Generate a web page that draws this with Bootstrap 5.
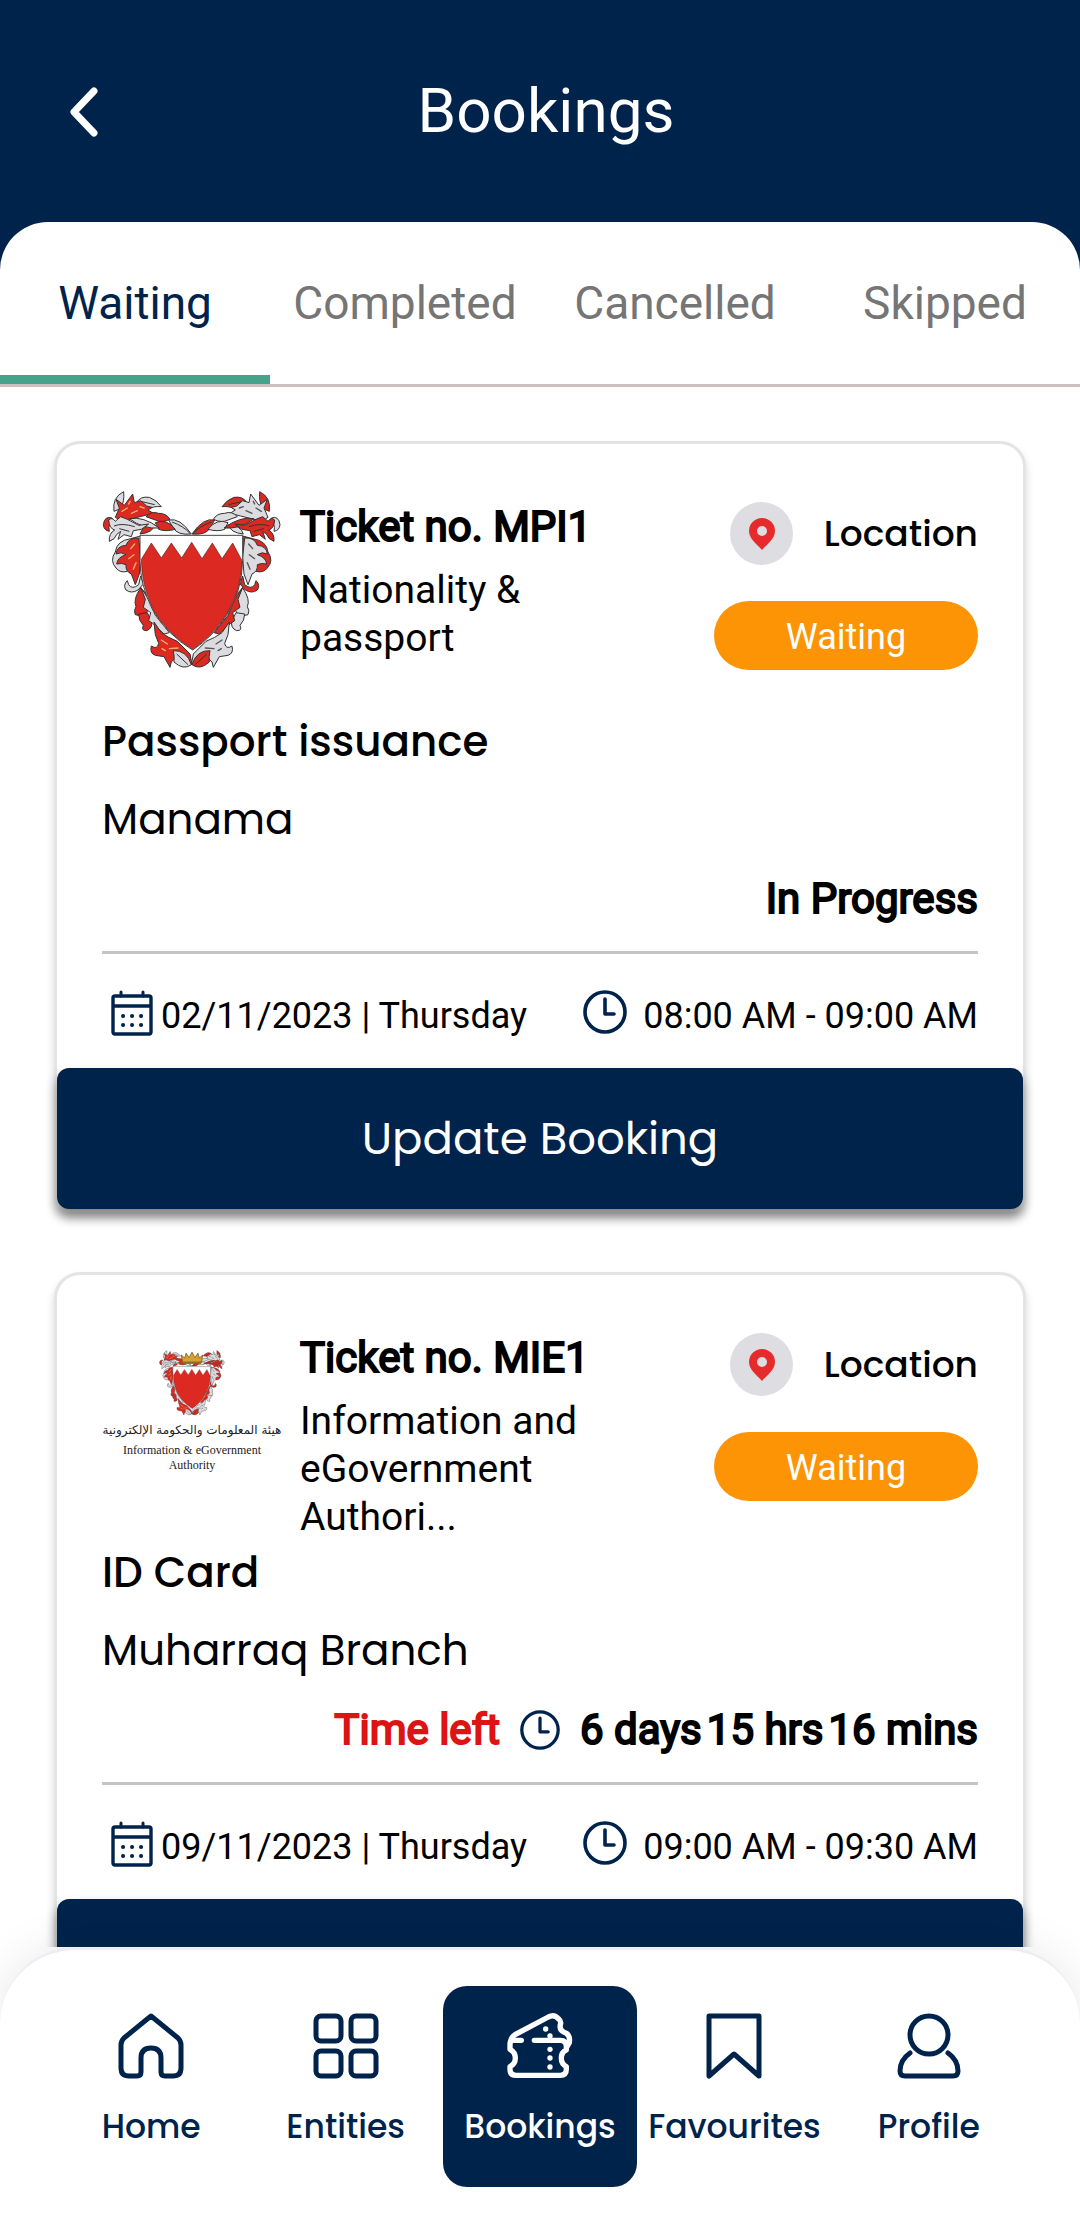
<!DOCTYPE html>
<html lang="en">
<head>
<meta charset="utf-8">
<meta name="viewport" content="width=device-width, initial-scale=1">
<title>Bookings</title>
<link href="https://cdn.jsdelivr.net/npm/bootstrap@5.3.0/dist/css/bootstrap.min.css" rel="stylesheet">
<style>
  :root { --navy: #00234c; }
  body { font-family: Roboto, "Liberation Sans", sans-serif; color: #000; background: #fff; }
  .geo { font-family: Poppins, Inter, "Open Sans", sans-serif; }
  .app-shell { height: 100vh; overflow: hidden; }
  .app-header { background: var(--navy); height: 222px; display: grid; grid-template-columns: 150px 1fr 138px; align-items: center; }
  .app-header h1 { font-size: 62px; font-weight: 400; line-height: 72px; }
  .back-btn { width: 54px; height: 72px; margin-left: 57px; line-height: 1; }
  .tab-backdrop { background: var(--navy); }
  .tab-sheet { background: #fff; border-radius: 48px 48px 0 0; border-bottom: 3px solid #cdc0c0; overflow: hidden; }
  .tab-sheet .nav-link { height: 162px; padding: 0; border-radius: 0; color: #757575; font-size: 46px; line-height: 162px; position: relative; }
  .tab-sheet .nav-link.active { color: var(--navy); }
  .tab-sheet .nav-link.active::after { content: ""; position: absolute; left: 0; right: 0; bottom: 0; height: 9px; background: #45a38c; }
  .booking-list { padding: 54px 54px 0; gap: 60px; overflow: hidden; min-height: 0; flex: 1 1 0; }
  .booking { border: 3px solid #e4e4e4; border-radius: 26px 26px 14px 14px; box-shadow: 0 6px 9px rgba(0,0,0,.16); flex-shrink: 0; color: #000; }
  .booking .card-body { padding: 46px 45px 26px; }
  .booking-top { min-height: 222px; }
  .entity-logo { width: 180px; height: 180px; }
  .entity-text { padding: 12px 100px 0 18px; }
  .faux-bold { -webkit-text-stroke: 2px currentColor; font-size: 42px; line-height: 50px; font-weight: 400; }
  .entity-text h2 { white-space: nowrap; margin: 0 0 14px; }
  .entity-name { font-size: 39px; line-height: 48px; margin: 0; }
  .side-col { width: 264px; padding-top: 12px; gap: 36px; }
  .loc-link { color: #000; font-size: 36px; font-weight: 500; line-height: 63px; text-decoration: none; }
  .pin-disc { width: 63px; height: 63px; background: #dddde2; border-radius: 50%; }
  .status-pill { background: #fd9406; border-radius: 35px; height: 69px; font-size: 36px; line-height: 72px; font-weight: 400; padding: 0; }
  .svc { font-size: 42px; line-height: 60px; font-weight: 500; margin: 0 0 18px; }
  .branch { font-size: 42px; line-height: 60px; margin: 0 0 24px; }
  .state-row { gap: 20px; margin-bottom: 27px; }
  .state-row .left-label { color: #dc1414; }
  .time-parts { gap: 5px; }
  .rule { border: 0; border-top: 3px solid #c4c4c4; opacity: 1; margin: 0 0 36px; }
  .when-row { font-size: 36px; line-height: 52px; padding-left: 9px; }
  .update-btn { height: 141px; background: var(--navy); color: #fff; border: 0; border-radius: 12px; font-size: 45px; font-weight: 400; box-shadow: 0 8px 12px rgba(0,0,0,.42); }
  .update-btn:hover { background: var(--navy); color: #fff; }
  .logo-ar { font-family: "DejaVu Sans", sans-serif; font-size: 12px; line-height: 26px; color: #222; white-space: nowrap; }
  .logo-en { font-family: "Liberation Serif", serif; font-size: 12px; line-height: 15px; color: #222; text-align: center; white-space: nowrap; }
  .bottom-bar { height: 273px; border-top: 3px solid #eeeef2; border-radius: 76px 76px 0 0; box-shadow: 0 0 48px rgba(0,0,0,.09); padding: 36px 54px 0; background: #fff; z-index: 1; }
  .bar-item { height: 201px; padding: 27px 0 0; border-radius: 24px; color: var(--navy); font-size: 33px; line-height: 48px; font-weight: 500; text-decoration: none; gap: 24px; flex: 1 1 0; min-width: 0; }
  .bar-item.on { background: var(--navy); color: #fff; }
  .bar-item svg { width: 66px; height: 66px; }
  .ln { fill: none; stroke: currentColor; stroke-linecap: round; stroke-linejoin: round; }
  .lf-a { fill: var(--a); stroke: #333; stroke-width: 3; }
  .lf-b { fill: var(--b); stroke: #333; stroke-width: 3; }
  .vein { fill: none; stroke: #333; stroke-width: 3; }
  .glint { fill: none; stroke: var(--g); stroke-width: 4; stroke-linecap: round; }
  .side-l { --a: #dc2a22; --b: #dcdce0; --g: #ffb066; }
  .side-r { --a: #dcdce0; --b: #dc2a22; --g: #555; }
</style>
</head>
<body>
<svg width="0" height="0" class="position-absolute" aria-hidden="true">
  <symbol id="mantle" viewBox="0 0 600 600" overflow="visible">
    <path class="lf-b" d="M72 92Q66 50 101 33Q104 62 92 84z"/>
    <path class="lf-b" d="M140 66Q150 46 178 50Q200 58 214 78Q190 76 180 84Q160 84 140 66z"/>
    <path class="vein" d="M152 62L194 72"/>
    <path class="lf-a" d="M76 110L88 82L78 56L103 74L128 40L133 66L152 60L170 76L186 80L174 88L190 98L158 106L118 116Q90 122 76 110z"/>
    <path class="glint" d="M96 92L112 82M124 98L142 90M116 70L120 62M150 78L162 82"/>
    <path class="lf-a" d="M168 108Q184 90 206 98Q230 98 240 116Q214 128 196 118z"/>
    <path class="lf-b" d="M236 118Q270 110 304 160Q262 164 250 142z"/>
    <path class="vein" d="M246 124Q280 136 300 158"/>
    <path class="lf-a" d="M196 126Q230 112 256 146Q226 154 206 146z"/>
    <path class="lf-a" d="M150 160Q158 134 194 132Q190 156 150 160z"/>
    <path class="lf-b" d="M118 114Q160 106 208 142Q160 146 118 114z"/>
    <path class="lf-a" d="M40 132Q44 104 66 112L72 124Q52 126 58 152Q42 150 40 132z"/>
    <path class="lf-b" d="M56 118Q66 108 76 122L92 108L112 116L146 134L176 130L154 146L130 150L124 168L102 162L84 176L92 152Q78 160 72 174L58 182Q56 158 74 148Q58 144 56 118z"/>
    <path class="vein" d="M72 136Q96 126 134 138M88 144L118 152"/>
    <path class="lf-b" d="M122 174Q80 180 76 214Q58 240 78 262Q90 278 112 272L132 236L152 216L152 166z"/>
    <path class="lf-a" d="M146 172Q116 170 108 194Q80 196 78 220Q94 212 108 222Q82 230 80 250Q96 246 108 252Q106 272 124 280L136 312L148 280L152 230z"/>
    <path class="glint" d="M122 204L134 190M116 234L132 222M130 266L138 246"/>
    <path class="lf-b" d="M112 300Q98 314 108 328Q124 340 144 328L160 310L152 286L146 312Q126 328 116 312z"/>
    <path class="lf-a" d="M152 322Q128 356 138 378Q130 390 136 402Q150 408 166 402L184 372L170 340z"/>
    <path class="lf-a" d="M146 400Q146 420 160 434Q152 450 170 450Q190 442 184 420L172 396z"/>
    <path class="lf-b" d="M152 320L176 356L196 404L238 456L222 460L188 428L176 420L182 396L160 380L166 356z"/>
    <path class="lf-a" d="M192 424L214 456L236 470L262 482L300 520L306 552L286 528L262 526L244 544L240 560L222 528L196 524Q178 518 184 496Q202 508 206 488L196 462z"/>
    <path class="glint" d="M214 478L232 490M238 504L264 502M216 504L226 510"/>
    <path class="lf-b" d="M250 510Q290 508 304 552Q280 570 252 544Q254 528 250 510z"/>
    <path class="vein" d="M260 520L294 552"/>
  </symbol>
  <symbol id="arms" viewBox="36 28 540 540">
    <use href="#mantle" class="side-l" width="600" height="600"/>
    <g transform="translate(610 0) scale(-1 1)"><use href="#mantle" class="side-r" width="600" height="600"/></g>
    <path d="M150 164H458V240Q456 330 412 400Q370 468 308 508Q230 462 186 384Q150 310 150 240z" fill="#fff" stroke="#444" stroke-width="3"/>
    <path d="M154 236L184 187L214 232L244 187L275 232L305 185L336 234L367 187L396 234L428 187L456 240Q454 330 410 400Q368 466 308 506Q232 460 188 384Q154 310 154 236z" fill="#dc2a22" stroke="#552222" stroke-width="2"/>
  </symbol>
  <symbol id="crown" viewBox="0 0 60 36">
    <path d="M4 30L1 10L10 18L14 5L22 17L30 2L38 17L46 5L50 18L59 10L56 30z" fill="#d9a22e" stroke="#6b4d12" stroke-width="2"/>
    <path d="M5 31H55" stroke="#8f6a1c" stroke-width="6"/>
  </symbol>
  <symbol id="clock" viewBox="0 0 44 44">
    <circle cx="22" cy="22" r="20" class="ln" stroke-width="3.6"/>
    <path class="ln" stroke-width="3.6" d="M22 9V24H31"/>
  </symbol>
  <symbol id="cal" viewBox="0 0 42 46">
    <path class="ln" stroke-width="3.4" d="M4 6H38Q40 6 40 8V42Q40 44 38 44H4Q2 44 2 42V8Q2 6 4 6zM2 16H40"/>
    <path class="ln" stroke-width="3" d="M10 2V6M32 2V6"/>
    <path class="ln" stroke-width="4" d="M12 26h.1M21 26h.1M30 26h.1M12 35h.1M21 35h.1M30 35h.1"/>
  </symbol>
  <symbol id="pin" viewBox="0 0 26 32">
    <path fill="#e52b2b" fill-rule="evenodd" d="M13 0A13 13 0 0 0 0 13C0 21 8 26 13 32C18 26 26 21 26 13A13 13 0 0 0 13 0zM13 8a5 5 0 1 1 0 10a5 5 0 0 1 0-10z"/>
  </symbol>
</svg>

<div class="app-shell d-flex flex-column">
  <header class="app-header flex-shrink-0">
    <button type="button" class="btn back-btn p-0 border-0 text-white" aria-label="Back">
      <svg width="54" height="54" viewBox="0 0 54 54" aria-hidden="true"><path class="ln" stroke-width="7" d="M37 7L17 28L37 49"/></svg>
    </button>
    <h1 class="text-white text-center m-0">Bookings</h1>
  </header>

  <div class="tab-backdrop flex-shrink-0">
    <nav class="tab-sheet nav nav-justified" aria-label="Booking status">
      <a class="nav-link nav-item active" aria-current="page" href="#waiting">Waiting</a>
      <a class="nav-link nav-item" href="#completed">Completed</a>
      <a class="nav-link nav-item" href="#cancelled">Cancelled</a>
      <a class="nav-link nav-item" href="#skipped">Skipped</a>
    </nav>
  </div>

  <main class="booking-list d-flex flex-column">
    <article class="card booking">
      <div class="card-body">
        <div class="booking-top d-flex align-items-start">
          <svg class="entity-logo flex-shrink-0" role="img" aria-label="Coat of arms"><use href="#arms"/></svg>
          <div class="entity-text flex-grow-1">
            <h2 class="faux-bold">Ticket no. MPI1</h2>
            <p class="entity-name">Nationality &amp; passport</p>
          </div>
          <div class="side-col d-flex flex-column flex-shrink-0">
            <a href="#location" class="loc-link geo d-flex justify-content-between ps-3">
              <span class="pin-disc d-flex align-items-center justify-content-center"><svg width="26" height="32" aria-hidden="true"><use href="#pin"/></svg></span>
              Location
            </a>
            <span class="badge status-pill">Waiting</span>
          </div>
        </div>
        <h3 class="svc geo">Passport issuance</h3>
        <p class="branch geo">Manama</p>
        <div class="state-row d-flex justify-content-end faux-bold">In Progress</div>
        <hr class="rule">
        <div class="when-row d-flex justify-content-between">
          <span class="d-flex gap-2"><svg width="42" height="46" color="#00234c" aria-hidden="true"><use href="#cal"/></svg>02/11/2023 | Thursday</span>
          <span class="d-flex gap-3"><svg width="44" height="44" color="#00234c" aria-hidden="true"><use href="#clock"/></svg>08:00 AM - 09:00 AM</span>
        </div>
      </div>
      <button type="button" class="btn update-btn geo w-100">Update Booking</button>
    </article>

    <article class="card booking">
      <div class="card-body">
        <div class="booking-top d-flex align-items-start">
          <div class="entity-logo flex-shrink-0 d-flex flex-column align-items-center justify-content-center">
            <svg width="66" height="68" viewBox="0 0 66 68" role="img" aria-label="Coat of arms"><use href="#arms" x="0" y="1" width="66" height="66"/><use href="#crown" x="22" y="0" width="22" height="18"/></svg>
            <div class="logo-ar" lang="ar" dir="rtl">هيئة المعلومات والحكومة الإلكترونية</div>
            <div class="logo-en">Information &amp; eGovernment<br>Authority</div>
          </div>
          <div class="entity-text flex-grow-1">
            <h2 class="faux-bold">Ticket no. MIE1</h2>
            <p class="entity-name">Information and eGovernment Authori...</p>
          </div>
          <div class="side-col d-flex flex-column flex-shrink-0">
            <a href="#location" class="loc-link geo d-flex justify-content-between ps-3">
              <span class="pin-disc d-flex align-items-center justify-content-center"><svg width="26" height="32" aria-hidden="true"><use href="#pin"/></svg></span>
              Location
            </a>
            <span class="badge status-pill">Waiting</span>
          </div>
        </div>
        <h3 class="svc geo">ID Card</h3>
        <p class="branch geo">Muharraq Branch</p>
        <div class="state-row d-flex justify-content-end align-items-center faux-bold">
          <span class="left-label">Time left</span>
          <svg width="40" height="40" color="#00234c" aria-hidden="true"><use href="#clock"/></svg>
          <span class="time-parts d-flex"><span>6 days</span><span>15 hrs</span><span>16 mins</span></span>
        </div>
        <hr class="rule">
        <div class="when-row d-flex justify-content-between">
          <span class="d-flex gap-2"><svg width="42" height="46" color="#00234c" aria-hidden="true"><use href="#cal"/></svg>09/11/2023 | Thursday</span>
          <span class="d-flex gap-3"><svg width="44" height="44" color="#00234c" aria-hidden="true"><use href="#clock"/></svg>09:00 AM - 09:30 AM</span>
        </div>
      </div>
      <button type="button" class="btn update-btn geo w-100" aria-label="Update Booking"></button>
    </article>
  </main>

  <nav class="bottom-bar d-flex align-items-start flex-shrink-0 geo" aria-label="Main">
    <a class="bar-item d-flex flex-column align-items-center" href="#home">
      <svg viewBox="0 0 66 66" aria-hidden="true"><path class="ln" stroke-width="5" d="M33 3L60 25Q63 28 63 32V55Q63 63 55 63H47Q43 63 43 59V45Q43 35 33 35Q23 35 23 45V59Q23 63 19 63H11Q3 63 3 55V32Q3 28 6 25z"/></svg>
      Home
    </a>
    <a class="bar-item d-flex flex-column align-items-center" href="#entities">
      <svg viewBox="0 0 66 66" aria-hidden="true"><g class="ln" stroke-width="5"><rect x="3" y="3" width="25" height="25" rx="5"/><rect x="38" y="3" width="25" height="25" rx="5"/><rect x="3" y="38" width="25" height="25" rx="5"/><rect x="38" y="38" width="25" height="25" rx="5"/></g></svg>
      Entities
    </a>
    <a class="bar-item on d-flex flex-column align-items-center" href="#bookings" aria-current="page">
      <svg viewBox="80 69 198 198" aria-hidden="true">
        <path class="ln" stroke-width="16" d="M123 151H98Q89 151 89 164V178Q105 186 105 205Q105 222 89 230V238Q89 256 107 256H240Q258 256 258 238V230Q243 222 243 205Q243 186 258 180V170Q258 151 240 151H162"/>
        <path class="ln" stroke-width="16" d="M92 150Q94 140 104 134L204 81Q222 72 234 86Q244 94 240 104Q236 122 258 130Q270 138 267 158L260 170"/>
        <g fill="currentColor"><circle cx="196" cy="117" r="8"/><circle cx="209" cy="138" r="8"/><circle cx="209" cy="178" r="8"/><circle cx="209" cy="204" r="8"/><circle cx="209" cy="231" r="8"/></g>
      </svg>
      Bookings
    </a>
    <a class="bar-item d-flex flex-column align-items-center" href="#favourites">
      <svg viewBox="0 0 66 66" aria-hidden="true"><path class="ln" stroke-width="5" d="M8 3H58V63L33 41L8 63z"/></svg>
      Favourites
    </a>
    <a class="bar-item d-flex flex-column align-items-center" href="#profile">
      <svg viewBox="0 0 66 66" aria-hidden="true"><g class="ln" stroke-width="5"><circle cx="33" cy="22" r="19"/><path d="M14 40Q4 47 4 58Q4 63 9 63H57Q62 63 62 58Q62 47 52 40"/></g></svg>
      Profile
    </a>
  </nav>
</div>
<script src="https://cdn.jsdelivr.net/npm/bootstrap@5.3.0/dist/js/bootstrap.bundle.min.js"></script>
</body>
</html>
